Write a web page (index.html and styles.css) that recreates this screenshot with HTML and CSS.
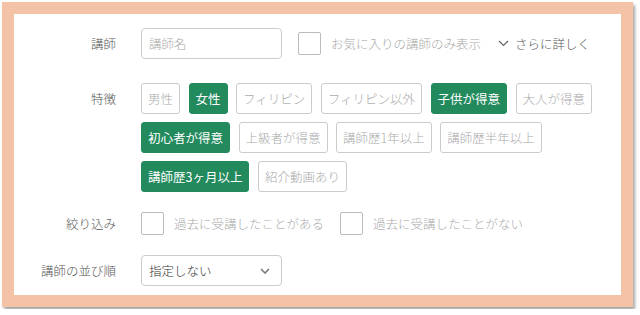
FILE: index.html
```html
<!DOCTYPE html>
<html lang="ja">
<head>
    <meta charset="UTF-8">
    <title>講師検索</title>
    <link rel="stylesheet" href="styles.css">
</head>
<body>
    <div class="frame">
        <div class="search-form">
            <!-- 講師 -->
            <div class="form-row row-teacher">
                <div class="form-label">講師</div>
                <div class="form-field inline">
                    <div class="text-input">講師名</div>
                    <span class="checkbox"></span>
                    <span class="check-text">お気に入りの講師のみ表示</span>
                    <span class="more-link">
                        <svg width="11" height="7" viewBox="0 0 11 7"><path d="M1 1l4.5 4.5L10 1" fill="none" stroke="#666" stroke-width="1.2"/></svg>
                        さらに詳しく
                    </span>
                </div>
            </div>

            <!-- 特徴 -->
            <div class="form-row row-tags">
                <div class="form-label">特徴</div>
                <div class="form-field tag-list">
                    <span class="tag">男性</span>
                    <span class="tag active">女性</span>
                    <span class="tag">フィリピン</span>
                    <span class="tag">フィリピン以外</span>
                    <span class="tag active">子供が得意</span>
                    <span class="tag">大人が得意</span>
                    <span class="tag active">初心者が得意</span>
                    <span class="tag">上級者が得意</span>
                    <span class="tag">講師歴1年以上</span>
                    <span class="tag">講師歴半年以上</span>
                    <span class="tag active">講師歴3ヶ月以上</span>
                    <span class="tag">紹介動画あり</span>
                </div>
            </div>

            <!-- 絞り込み -->
            <div class="form-row">
                <div class="form-label">絞り込み</div>
                <div class="form-field inline">
                    <span class="checkbox first"></span>
                    <span class="check-text">過去に受講したことがある</span>
                    <span class="checkbox"></span>
                    <span class="check-text">過去に受講したことがない</span>
                </div>
            </div>

            <!-- 並び順 -->
            <div class="form-row row-sort">
                <div class="form-label">講師の並び順</div>
                <div class="form-field inline">
                    <div class="select-box">
                        <span>指定しない</span>
                        <svg width="10" height="6" viewBox="0 0 10 6"><path d="M1 1l4 4 4-4" fill="none" stroke="#777" stroke-width="1.6"/></svg>
                    </div>
                </div>
            </div>
        </div>
    </div>
</body>
</html>
```

FILE: styles.css
```css
body {
    margin: 0;
    padding: 2px;
    background: #ffffff;
    font-family: "Noto Sans CJK JP", "Noto Sans", sans-serif;
    font-size: 12.5px;
    font-weight: 300;
}

.frame {
    width: 631px;
    height: 305px;
    box-sizing: border-box;
    border: 12px solid #f4c3a7;
    background: #ffffff;
    box-shadow: 2px 3px 3px rgba(0, 0, 0, 0.35);
}

.search-form {
    padding: 14px 0 0 0;
}

.form-row {
    display: grid;
    grid-template-columns: 102px 1fr;
    column-gap: 25px;
    margin-bottom: 16px;
}

.row-teacher {
    margin-bottom: 24px;
}

.row-sort {
    margin-bottom: 0;
}

.form-label {
    text-align: right;
    line-height: 31px;
    color: #555555;
    white-space: nowrap;
}

.form-field.inline {
    display: flex;
    align-items: center;
    height: 31px;
}

.text-input {
    width: 141px;
    height: 31px;
    box-sizing: border-box;
    border: 1px solid #cccccc;
    border-radius: 4px;
    padding: 0 7px;
    line-height: 29px;
    color: #aaaaaa;
}

.checkbox {
    width: 23px;
    height: 23px;
    box-sizing: border-box;
    border: 1px solid #bbbbbb;
    border-radius: 2px;
    background: #ffffff;
    margin-left: 16px;
    flex-shrink: 0;
}

.checkbox.first {
    margin-left: 0;
}

.check-text {
    margin-left: 10px;
    color: #aaaaaa;
    white-space: nowrap;
}

.more-link {
    margin-left: 17px;
    color: #555555;
    display: flex;
    align-items: center;
    gap: 6px;
    white-space: nowrap;
}

.tag-list {
    display: flex;
    flex-wrap: wrap;
    gap: 8px 8.5px;
}

.tag {
    height: 31px;
    box-sizing: border-box;
    border: 1px solid #cccccc;
    border-radius: 3px;
    padding: 0 6px;
    line-height: 29px;
    color: #aaaaaa;
    white-space: nowrap;
}

.tag.active {
    background: #228a5d;
    border-color: #228a5d;
    color: #ffffff;
    font-weight: 400;
}

.select-box {
    width: 141px;
    height: 31px;
    box-sizing: border-box;
    border: 1px solid #cccccc;
    border-radius: 4px;
    padding: 0 11px 0 7px;
    display: flex;
    align-items: center;
    justify-content: space-between;
    color: #333333;
}
```
